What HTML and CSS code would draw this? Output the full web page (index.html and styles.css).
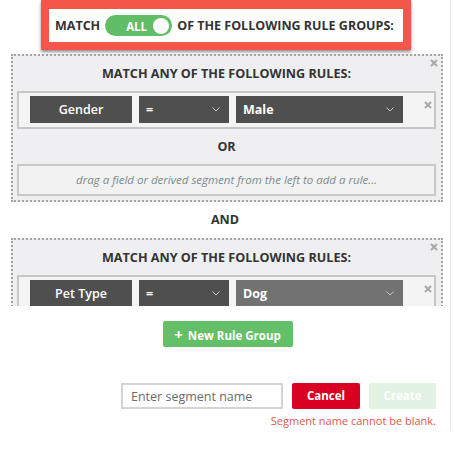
FILE: index.html
```html
<!DOCTYPE html>
<html lang="en">
<head>
  <meta charset="UTF-8">
  <title>Segment Builder</title>
  <link rel="stylesheet" href="styles.css">
</head>
<body>
  <div class="panel">
    <div class="rules-scroll">
      <div class="groups-header">
        <span>MATCH</span>
        <span class="toggle"><span class="toggle-label">ALL</span><span class="knob"></span></span>
        <span>OF THE FOLLOWING RULE GROUPS:</span>
      </div>

      <div class="rule-group">
        <span class="close group-close"><svg width="8" height="8" viewBox="0 0 8 8"><path d="M1 1L7 7M7 1L1 7"/></svg></span>
        <div class="group-title">MATCH ANY OF THE FOLLOWING RULES:</div>
        <div class="rule-row">
          <div class="field">Gender</div>
          <div class="select op">=<svg class="chev" width="8" height="5" viewBox="0 0 8 5"><path d="M0.5 0.5L4 4L7.5 0.5"/></svg></div>
          <div class="select value">Male<svg class="chev" width="8" height="5" viewBox="0 0 8 5"><path d="M0.5 0.5L4 4L7.5 0.5"/></svg></div>
          <span class="close row-close"><svg width="8" height="8" viewBox="0 0 8 8"><path d="M1 1L7 7M7 1L1 7"/></svg></span>
        </div>
        <div class="joiner">OR</div>
        <div class="drop-zone">drag a field or derived segment from the left to add a rule...</div>
      </div>

      <div class="joiner">AND</div>

      <div class="rule-group">
        <span class="close group-close"><svg width="8" height="8" viewBox="0 0 8 8"><path d="M1 1L7 7M7 1L1 7"/></svg></span>
        <div class="group-title">MATCH ANY OF THE FOLLOWING RULES:</div>
        <div class="rule-row">
          <div class="field">Pet Type</div>
          <div class="select op">=<svg class="chev" width="8" height="5" viewBox="0 0 8 5"><path d="M0.5 0.5L4 4L7.5 0.5"/></svg></div>
          <div class="select value hover">Dog<svg class="chev" width="8" height="5" viewBox="0 0 8 5"><path d="M0.5 0.5L4 4L7.5 0.5"/></svg></div>
          <span class="close row-close"><svg width="8" height="8" viewBox="0 0 8 8"><path d="M1 1L7 7M7 1L1 7"/></svg></span>
        </div>
      </div>
    </div>

    <div class="new-group">
      <button class="new-group-btn"><span class="plus">+</span>New Rule Group</button>
    </div>

    <div class="save-form">
      <div class="save-row">
        <input type="text" class="name-input" placeholder="Enter segment name">
        <button class="cancel-btn">Cancel</button>
        <button class="create-btn" disabled>Create</button>
      </div>
      <p class="error">Segment name cannot be blank.</p>
    </div>
  </div>
</body>
</html>
```

FILE: styles.css
```css
body {
  margin: 0;
  padding: 0;
  font-family: 'Open Sans', Arial, sans-serif;
  background-color: #FFFFFF;
  color: #333333;
}
.panel {
  width: 451px;
  height: 430px;
  border-right: 1px solid #E6E6E6;
  box-sizing: border-box;
}
.rules-scroll {
  height: 306px;
  overflow: hidden;
}
.groups-header {
  width: 370px;
  height: 50px;
  margin: 0 0 0 41px;
  box-sizing: border-box;
  border: 8px solid #F2574A;
  border-top-width: 9px;
  background-color: #FFFFFF;
  box-shadow: 0 2px 3px rgba(0,0,0,0.45);
  display: flex;
  align-items: center;
  padding-left: 6px;
  font-size: 12.5px;
  font-weight: 700;
  color: #333333;
  position: relative;
  z-index: 1;
}
.toggle {
  display: flex;
  align-items: center;
  width: 67px;
  height: 21px;
  margin: 0 5px 0 5px;
  border-radius: 11px;
  background-color: #62BE66;
  color: #FFFFFF;
  font-size: 11.5px;
  box-sizing: border-box;
  padding: 0 3px 0 21px;
}
.toggle-label {
  flex: 1;
  padding-top: 2px;
}
.knob {
  width: 16px;
  height: 16px;
  border-radius: 50%;
  background-color: #FFFFFF;
}
.rule-group {
  position: relative;
  margin: 4px 7px 0 11px;
  border: 2px dotted #A3A3A3;
  background-color: #EFEFF1;
  padding: 0 5px 4px 4px;
}
.close svg {
  display: block;
  stroke: #A8A8A8;
  stroke-width: 2;
}
.group-close {
  position: absolute;
  top: 3px;
  right: 3px;
}
.group-title {
  height: 35px;
  line-height: 35px;
  text-align: center;
  font-size: 12.6px;
  font-weight: 700;
  color: #333333;
}
.rule-row {
  display: flex;
  align-items: flex-start;
  border: 2px solid #C6C6C6;
  background-color: #F4F4F4;
  padding: 3px 0 4px 11px;
}
.field, .select {
  height: 27px;
  line-height: 27px;
  background-color: #4F4F4F;
  color: #FFFFFF;
  font-size: 12.5px;
  box-sizing: border-box;
}
.field {
  width: 102px;
  text-align: center;
  font-weight: 600;
}
.select {
  display: flex;
  align-items: center;
  justify-content: space-between;
  padding: 0 9px 0 7px;
  margin-left: 7px;
}
.select.op {
  width: 90px;
  font-weight: 700;
}
.select.value {
  width: 167px;
  font-weight: 700;
}
.select.hover {
  background-color: #727272;
}
.chev {
  fill: none;
  stroke: #C8C8C8;
  stroke-width: 1;
}
.row-close {
  margin: 5px 0 0 21px;
}
.joiner {
  height: 35px;
  line-height: 35px;
  text-align: center;
  font-size: 12.5px;
  font-weight: 700;
  color: #333333;
}
.rules-scroll > .joiner {
  height: 36px;
  line-height: 36px;
}
.rules-scroll > .joiner + .rule-group {
  margin-top: 0;
  height: 120px;
}
.drop-zone {
  height: 32px;
  line-height: 28px;
  box-sizing: border-box;
  border: 2px solid #C8C8C8;
  background-color: #F2F2F2;
  text-align: center;
  font-size: 11.5px;
  font-style: italic;
  color: #7A8A8C;
}
.new-group {
  display: flex;
  justify-content: center;
  padding: 15px 0 0 5px;
}
.new-group-btn {
  width: 130px;
  height: 26px;
  line-height: 26px;
  border: none;
  border-radius: 2px;
  background-color: #64C068;
  color: #FFFFFF;
  font-family: 'Open Sans', Arial, sans-serif;
  font-size: 11.5px;
  font-weight: 700;
  padding: 0;
}
.plus {
  font-size: 15px;
  margin-right: 5px;
}
.save-form {
  padding: 36px 14px 0 0;
}
.save-row {
  display: flex;
  justify-content: flex-end;
  gap: 9px;
}
.name-input {
  width: 162px;
  height: 26px;
  box-sizing: border-box;
  border: 2px solid #D3D3D3;
  padding: 0 8px;
  font-family: 'Open Sans', Arial, sans-serif;
  font-size: 12.5px;
}
.name-input::placeholder {
  color: #6A6A6A;
}
.cancel-btn, .create-btn {
  height: 26px;
  line-height: 26px;
  border: none;
  border-radius: 2px;
  font-family: 'Open Sans', Arial, sans-serif;
  font-size: 11.5px;
  font-weight: 700;
  color: #FFFFFF;
  padding: 0;
}
.cancel-btn {
  width: 68px;
  background-color: #D90021;
}
.create-btn {
  width: 67px;
  background-color: #E2F2E3;
}
.error {
  margin: 4px 0 0;
  text-align: right;
  font-size: 11px;
  color: #E8564B;
}
```
